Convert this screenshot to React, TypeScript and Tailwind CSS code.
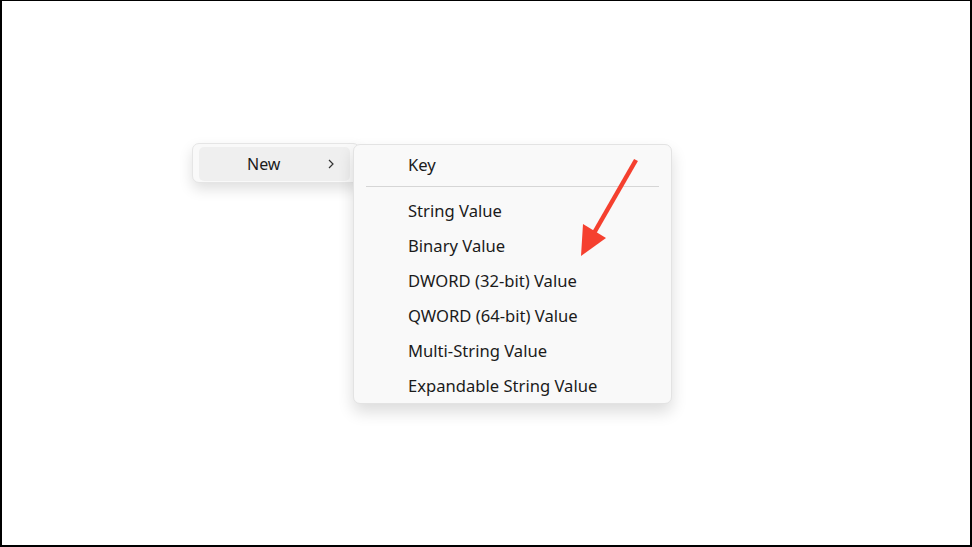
import React from "react";

const items = [
  "String Value",
  "Binary Value",
  "DWORD (32-bit) Value",
  "QWORD (64-bit) Value",
  "Multi-String Value",
  "Expandable String Value",
];

export default function App() {
  return (
    <div
      className="relative w-[972px] h-[547px] bg-white border-black border-t border-l-2 border-r-2 border-b-2 overflow-hidden"
      style={{ fontFamily: '"Noto Sans", "Open Sans", sans-serif' }}
    >
      {/* parent menu */}
      <div className="absolute left-[190px] top-[142px] w-[168px] h-[40px] rounded-[7px] bg-[#f9f9f9] border border-[#e5e5e5] shadow-[0_6px_14px_rgba(0,0,0,0.13)] p-[3px] pl-[6px]">
        <div className="flex items-center h-[34px] w-[151px] rounded-[5px] bg-[#efefef] text-[16px] text-[#1b1b1b]">
          <span className="ml-[48px]">New</span>
          <svg className="ml-[46px]" width="10" height="12" viewBox="0 0 10 12">
            <path d="M3 2 L7 6 L3 10" fill="none" stroke="#333" strokeWidth="1.2" />
          </svg>
        </div>
      </div>

      {/* submenu */}
      <div className="absolute left-[351px] top-[143px] w-[319px] h-[260px] rounded-[7px] bg-[#f9f9f9] border border-[#e3e3e3] shadow-[0_8px_16px_rgba(0,0,0,0.14)] pt-[2px] text-[16.6px] text-[#1b1b1b]">
        <div className="flex items-center h-[36px] pl-[54px]">Key</div>
        <div className="mt-[3px] mb-[7px] mx-[12px] h-px bg-[#d6d6d6]" />
        {items.map((t) => (
          <div key={t} className="flex items-center h-[35px] pl-[54px]">
            {t}
          </div>
        ))}
      </div>

      {/* red arrow */}
      <svg className="absolute left-0 top-0" width="972" height="547">
        <line x1="634" y1="159" x2="592" y2="232" stroke="#f5402f" strokeWidth="4.5" strokeLinecap="butt" />
        <polygon points="579,255 581,223 604,237" fill="#f5402f" />
      </svg>
    </div>
  );
}
